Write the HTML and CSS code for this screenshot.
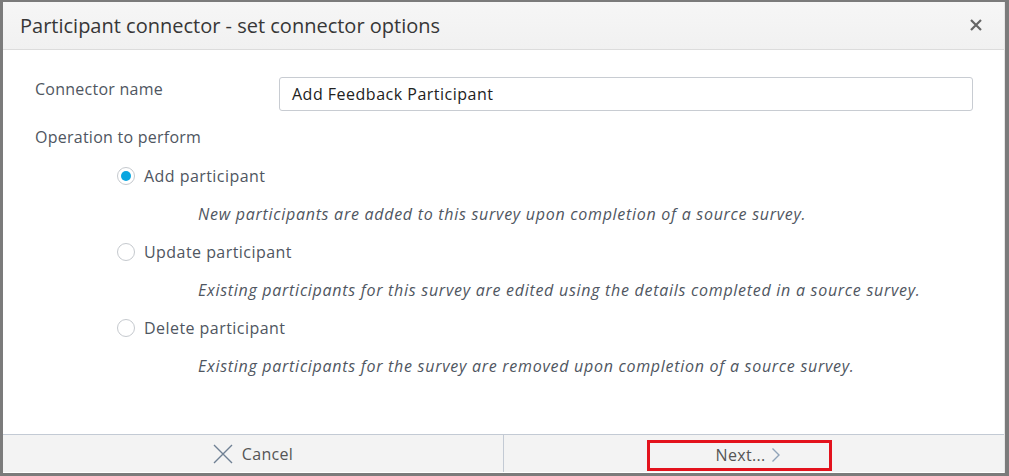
FILE: index.html
```html
<!DOCTYPE html>
<html>
<head>
<meta charset="utf-8">
<link rel="stylesheet" href="styles.css">
</head>
<body>
<div class="backdrop">
  <div class="dialog">
    <div class="header">
      <div class="title">Participant connector - set connector options</div>
      <svg class="close" width="14" height="14" viewBox="0 0 14 14"><path d="M2 2L12 12M12 2L2 12" stroke="#666" stroke-width="2.2" fill="none"/></svg>
    </div>
    <div class="body">
      <div class="field">
        <div class="label">Connector name</div>
        <div class="input">Add Feedback Participant</div>
      </div>
      <div class="label op">Operation to perform</div>
      <div class="options">
        <div class="option"><span class="radio checked"></span><span class="opt-label">Add participant</span></div>
        <div class="desc">New participants are added to this survey upon completion of a source survey.</div>
        <div class="option"><span class="radio"></span><span class="opt-label">Update participant</span></div>
        <div class="desc">Existing participants for this survey are edited using the details completed in a source survey.</div>
        <div class="option"><span class="radio"></span><span class="opt-label">Delete participant</span></div>
        <div class="desc">Existing participants for the survey are removed upon completion of a source survey.</div>
      </div>
    </div>
    <div class="footer">
      <div class="btn cancel">
        <svg width="20" height="20" viewBox="0 0 20 20"><path d="M1 1L19 19M19 1L1 19" stroke="#6f8094" stroke-width="1.4" fill="none"/></svg>
        <span>Cancel</span>
      </div>
      <div class="btn next">
        <div class="highlight">
          <span>Next...</span>
          <svg width="10" height="16" viewBox="0 0 10 16"><path d="M1.5 1.5L8 8L1.5 14.5" stroke="#8fa3b8" stroke-width="1.4" fill="none"/></svg>
        </div>
      </div>
    </div>
  </div>
</div>
</body>
</html>
```
FILE: styles.css
```css
html, body { margin: 0; padding: 0; }
body {
  width: 1009px;
  height: 476px;
  background: #7b7b7b;
  font-family: "Open Sans", "Lato", sans-serif;
  overflow: hidden;
}
.backdrop {
  padding: 2px 4px 3px 3px;
  height: 471px;
}
.dialog {
  background: #fff;
  height: 471px;
  display: flex;
  flex-direction: column;
  border-right: 1px solid #e6e6e6;
}
.header {
  height: 47px;
  background: linear-gradient(#f6f6f6, #f1f1f1);
  border-bottom: 1px solid #dcdcdc;
  display: flex;
  align-items: center;
  justify-content: space-between;
  padding: 0 21px 0 17px;
}
.title {
  font-size: 20px;
  color: #373737;
}
.close { margin-top: -2px; }
.body {
  flex: 1;
  padding: 27px 31px 0 32px;
}
.field {
  display: grid;
  grid-template-columns: 244px 1fr;
  align-items: start;
}
.label {
  font-size: 16px;
  color: #4f5661;
  line-height: 22px;
  letter-spacing: 0.25px;
}
.field .label { padding-top: 1px; }
.input {
  border: 1px solid #c8ccd2;
  border-radius: 3px;
  box-sizing: border-box;
  height: 34px;
  padding: 0 12px;
  display: flex;
  align-items: center;
  font-size: 16px;
  color: #222;
  letter-spacing: 0.5px;
}
.op { margin-top: 15px; }
.options {
  padding-left: 82px;
  margin-top: 9px;
}
.option {
  height: 38px;
  display: flex;
  align-items: center;
  font-size: 16px;
  color: #4f5661;
  letter-spacing: 0.45px;
}
.radio {
  width: 16px;
  height: 16px;
  border: 1px solid #c5c9ce;
  border-radius: 50%;
  box-sizing: content-box;
  margin-right: 9px;
  position: relative;
  flex: none;
}
.radio.checked::after {
  content: "";
  position: absolute;
  left: 3px; top: 3px;
  width: 10px; height: 10px;
  border-radius: 50%;
  background: #0aa6e0;
}
.desc {
  height: 38px;
  line-height: 38px;
  padding-left: 81px;
  font-size: 16px;
  font-style: italic;
  color: #4f5661;
  letter-spacing: 0.72px;
}
.footer {
  height: 37px;
  border-top: 1px solid #c3cad4;
  border-bottom: 1px solid #fff;
  background: #f3f3f3;
  display: flex;
}
.btn {
  flex: 1;
  display: flex;
  align-items: center;
  justify-content: center;
  font-size: 16px;
  color: #555;
  letter-spacing: 0.3px;
}
.cancel { border-right: 1px solid #c3cad4; gap: 9px; }
.cancel svg { margin-top: 1px; }
.highlight {
  width: 185px;
  height: 31px;
  box-sizing: border-box;
  border: 3px solid #e3121c;
  display: flex;
  align-items: center;
  justify-content: center;
  gap: 6px;
  padding-left: 18px;
  margin-right: 29px;
  margin-top: 3px;
}
```
